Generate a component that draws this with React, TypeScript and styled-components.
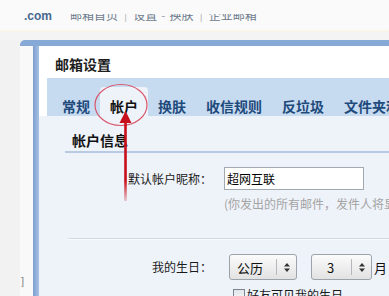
import React from 'react'
import styled, { createGlobalStyle } from 'styled-components'

const GlobalStyle = createGlobalStyle`
  html, body {
    margin: 0;
    padding: 0;
    background: #f2f2f2;
  }
  body {
    font-family: "Noto Sans CJK SC", "Noto Sans", sans-serif;
    color: #222;
  }
`

const tabs = ['常规', '帐户', '换肤', '收信规则', '反垃圾', '文件夹和标签']

const App = () => {
  return (
    <Page>
      <GlobalStyle />
      <TopBar>
        <Logo>.com</Logo>
        <NavClip>
          <NavText>
            邮箱首页<Sep>|</Sep>设置<Dash>-</Dash>换肤<Sep>|</Sep>企业邮箱
          </NavText>
        </NavClip>
      </TopBar>
      <Frame>
        <Gutter>
          <Bracket>]</Bracket>
        </Gutter>
        <Rail />
        <Panel>
          <PanelHead>邮箱设置</PanelHead>
          <TabBar>
            {tabs.map((t) => (
              <Tab key={t} $active={t === '帐户'}>
                {t}
              </Tab>
            ))}
          </TabBar>
          <Content>
            <SectionTitle>帐户信息</SectionTitle>
            <Form>
              <Label>默认帐户昵称：</Label>
              <TextInput>超网互联</TextInput>
              <span />
              <Hint>(你发出的所有邮件，发件人将显示为该昵称)</Hint>
            </Form>
            <Divider />
            <Form>
              <Label $tall>我的生日：</Label>
              <Fields>
                <Select $width={68} $pad={7}>
                  <SelectText>公历</SelectText>
                  <Arrow>
                    <UpDown />
                  </Arrow>
                </Select>
                <Select $width={61} $pad={15}>
                  <SelectText>3</SelectText>
                  <Arrow>
                    <UpDown />
                  </Arrow>
                </Select>
                <Unit>月</Unit>
              </Fields>
              <span />
              <CheckRow>
                <Check />
                好友可见我的生日
              </CheckRow>
            </Form>
          </Content>
        </Panel>
      </Frame>
      <Overlay width="389" height="296" viewBox="0 0 389 296">
        <defs>
          <linearGradient id="fade" x1="0" y1="0" x2="0" y2="1">
            <stop offset="0" stopColor="#c8101c" />
            <stop offset="0.75" stopColor="#c8101c" />
            <stop offset="1" stopColor="#c8101c" stopOpacity="0.2" />
          </linearGradient>
        </defs>
        <ellipse cx="121" cy="105" rx="26" ry="20.5" fill="none" stroke="#d9576a" strokeWidth="1.2" />
        <rect x="124.2" y="119" width="2.6" height="82" fill="url(#fade)" />
        <polygon points="125.6,111 119.5,123 131.5,123" fill="#c8101c" />
      </Overlay>
    </Page>
  )
}

const UpDown = () => (
  <svg width="6" height="9" viewBox="0 0 6 9">
    <polygon points="3,0 6,3.5 0,3.5" fill="#333" />
    <polygon points="3,9 6,5.5 0,5.5" fill="#333" />
  </svg>
)

const Page = styled.div`
  position: relative;
  width: 389px;
  height: 296px;
  overflow: hidden;
  display: flex;
  flex-direction: column;
  background: #f2f2f2;
`

const TopBar = styled.div`
  height: 40px;
  flex-shrink: 0;
  box-sizing: border-box;
  display: flex;
  align-items: flex-start;
  padding: 9px 0 0 24px;
  background: linear-gradient(#fafafa 0, #fafafa 30px, #f8f3e2 31px, #f4f4f4 33px);
`

const Logo = styled.div`
  font-family: "Liberation Sans", Arial, sans-serif;
  font-size: 12px;
  font-weight: bold;
  line-height: 14px;
  color: #48698f;
  width: 46px;
  flex-shrink: 0;
`

const NavClip = styled.div`
  margin-top: 5px;
  height: 8px;
  overflow: hidden;
`

const NavText = styled.div`
  margin-top: -6px;
  font-size: 12px;
  line-height: 14px;
  color: #6d7b8c;
  white-space: nowrap;
`

const Sep = styled.span`
  color: #b5b5b5;
  margin: 0 6px;
`

const Dash = styled.span`
  color: #9aa3ad;
  margin: 0 4px;
`

const Frame = styled.div`
  flex: 1;
  min-height: 0;
  margin-left: 20px;
  display: flex;
  border-top: 6px solid #86a9d6;
  border-top-left-radius: 5px;
`

const Gutter = styled.div`
  width: 13px;
  flex-shrink: 0;
  background: #f9f9f9;
  display: flex;
  flex-direction: column;
  justify-content: flex-end;
  padding-bottom: 8px;
`

const Bracket = styled.div`
  font-family: "DejaVu Sans", sans-serif;
  font-size: 11px;
  color: #8a8a8a;
  line-height: 12px;
`

const Rail = styled.div`
  width: 6px;
  flex-shrink: 0;
  background: linear-gradient(to right, #7c9ecf, #a8c1e4);
`

const Panel = styled.div`
  flex: 1;
  min-width: 0;
  overflow: hidden;
  display: flex;
  flex-direction: column;
  background: #fff;
`

const PanelHead = styled.div`
  height: 32px;
  flex-shrink: 0;
  box-sizing: border-box;
  padding: 10px 0 0 16px;
  font-size: 14px;
  font-weight: bold;
  line-height: 16px;
  color: #1e1e1e;
`

const TabBar = styled.div`
  height: 38px;
  flex-shrink: 0;
  margin-left: 8px;
  padding-left: 5px;
  display: flex;
  align-items: flex-end;
  background: #c6daf0;
  white-space: nowrap;
`

const Tab = styled.div<{ $active?: boolean }>`
  height: 29px;
  flex-shrink: 0;
  box-sizing: border-box;
  padding: 11px 10px 0;
  font-size: 14px;
  font-weight: bold;
  line-height: 16px;
  color: ${(p) => (p.$active ? '#111' : '#1f4a7c')};
  background: ${(p) => (p.$active ? '#eef2f9' : 'transparent')};
  border-radius: 4px 4px 0 0;
`

const Content = styled.div`
  flex: 1;
  background: #eef2f9;
  padding-top: 15px;
`

const SectionTitle = styled.div`
  margin-left: 26px;
  padding: 0 0 2px 7px;
  font-size: 14px;
  font-weight: bold;
  line-height: 18px;
  color: #111;
  border-bottom: 2px solid #b9cbe3;
`

const Form = styled.div`
  display: grid;
  grid-template-columns: 173px 1fr;
  column-gap: 12px;
  margin-top: 14px;
  align-items: center;
`

const Label = styled.div<{ $tall?: boolean }>`
  text-align: right;
  font-size: 12px;
  line-height: ${(p) => (p.$tall ? '26px' : '23px')};
  color: #1a1a1a;
`

const TextInput = styled.div`
  width: 140px;
  height: 23px;
  box-sizing: border-box;
  border: 1px solid #a3a9b1;
  background: #fff;
  padding-left: 2px;
  font-size: 12px;
  line-height: 21px;
  color: #000;
`

const Hint = styled.div`
  margin-top: 6px;
  font-size: 12px;
  line-height: 16px;
  color: #a4a4a4;
  white-space: nowrap;
`

const Divider = styled.div`
  margin: 26px 0 0 29px;
  border-top: 1px solid #d3d9e2;
  border-bottom: 1px solid #f8fafd;
`

const Fields = styled.div`
  display: flex;
  align-items: center;
  gap: 14px;
  padding-left: 5px;
`

const Select = styled.div<{ $width: number; $pad: number }>`
  width: ${(p) => p.$width}px;
  height: 26px;
  flex-shrink: 0;
  box-sizing: border-box;
  display: flex;
  align-items: center;
  padding-left: ${(p) => p.$pad}px;
  border: 1px solid #9da3ab;
  border-radius: 3px;
  background: linear-gradient(#fbfbfb, #e2e2e2);
`

const SelectText = styled.span`
  flex: 1;
  font-size: 13px;
  color: #111;
`

const Arrow = styled.span`
  width: 19px;
  height: 16px;
  display: flex;
  align-items: center;
  justify-content: center;
  border-left: 1px solid #b4b8bd;
`

const Unit = styled.span`
  margin-left: -12px;
  font-size: 13px;
  color: #111;
  white-space: nowrap;
`

const CheckRow = styled.div`
  margin: 8px 0 0 9px;
  display: flex;
  align-items: center;
  gap: 2px;
  font-size: 12px;
  line-height: 14px;
  color: #1a1a1a;
  white-space: nowrap;
`

const Check = styled.span`
  width: 10px;
  height: 10px;
  flex-shrink: 0;
  border: 1px solid #7b8490;
  background: linear-gradient(#e2e6ea, #f6f7f8);
`

const Overlay = styled.svg`
  position: absolute;
  left: 0;
  top: 0;
  pointer-events: none;
`

export default App
